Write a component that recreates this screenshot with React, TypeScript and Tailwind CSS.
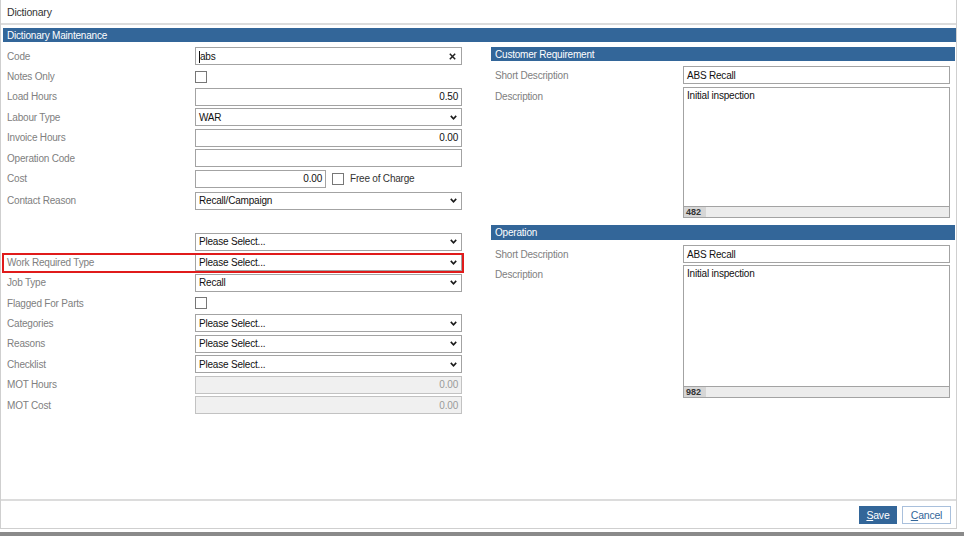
import React from "react";

const Chevron = () => (
  <svg width="7" height="5" viewBox="0 0 7 5" className="shrink-0">
    <path d="M0.8 0.9 L3.5 3.8 L6.2 0.9" fill="none" stroke="#1a1a1a" strokeWidth="1.6" />
  </svg>
);

const Row = ({
  label,
  children,
  tall,
}: {
  label: string;
  children?: React.ReactNode;
  tall?: boolean;
}) => (
  <div className={tall ? "flex items-center h-[24px]" : "flex items-center h-[20.4px]"}>
    <div className="w-[192px] pl-[4px] pt-[1px] text-[#808080] whitespace-nowrap">{label}</div>
    <div className="w-[267px] flex items-center">{children}</div>
  </div>
);

const TextInput = ({ value, right }: { value?: string; right?: boolean }) => (
  <div
    className={
      right
        ? "h-[18px] w-full border border-[#a3a3a3] bg-white flex items-center justify-end px-[3px] pt-[1px] text-[#111]"
        : "h-[18px] w-full border border-[#a3a3a3] bg-white flex items-center px-[3px] pt-[1px] text-[#111]"
    }
  >
    {value}
  </div>
);

const Disabled = ({ value }: { value: string }) => (
  <div className="h-[18px] w-full border border-[#c2c2c2] bg-[#f0f0f0] flex items-center justify-end px-[3px] pt-[1px] text-[#9a9a9a]">
    {value}
  </div>
);

const Select = ({ value }: { value: string }) => (
  <div className="h-[18px] w-full border border-[#a3a3a3] bg-white flex items-center justify-between pl-[3px] pr-[4px] text-[#111]">
    <span className="pt-[1px]">{value}</span>
    <Chevron />
  </div>
);

const Check = () => <div className="w-[12px] h-[12px] border border-[#777] bg-white" />;

const TextArea = ({ value, count, h }: { value: string; count: string; h: string }) => (
  <div className={h}>
    <div className="flex-1 px-[3px] pt-[1px] text-[#111]">{value}</div>
    <div className="h-[11px] border-t border-[#a3a3a3] bg-[#ececec] flex">
      <div className="w-[22px] bg-[#d6d6d6] pl-[2px] text-[9px] font-bold text-[#333] leading-[10px] tracking-normal">
        {count}
      </div>
    </div>
  </div>
);

export default function App() {
  return (
    <div className="w-[964px] h-[536px] bg-white overflow-hidden font-['Liberation_Sans',Arial,sans-serif] text-[10px] tracking-[-0.2px] leading-none">
      <div className="w-[957px] h-[529px] border-l border-r border-b border-[#cfcfcf] flex flex-col">
        {/* title */}
        <div className="h-[25px] border-b-2 border-[#dcdcdc] flex items-center pl-[6px] pt-[1px] text-[#333] text-[10.5px]">
          Dictionary
        </div>
        {/* main */}
        <div className="flex-1 pl-[2px] pt-[3px]">
          <div className="h-[14px] bg-[#336699] text-white flex items-center pl-[4px] pt-[1px]">
            Dictionary Maintenance
          </div>
          <div className="flex">
            {/* left column */}
            <div className="w-[462px] pt-[4px]">
              <Row label="Code">
                <div className="h-[18px] w-full border border-[#a3a3a3] bg-white flex items-center justify-between pl-[3px] pr-[5px] text-[#111]">
                  <span className="flex items-center pt-[1px]">
                    <span className="inline-block w-[1px] h-[12px] bg-[#111]" />
                    abs
                  </span>
                  <svg width="7" height="7" viewBox="0 0 7 7">
                    <path d="M0.8 0.8 L6.2 6.2 M6.2 0.8 L0.8 6.2" stroke="#222" strokeWidth="1.5" />
                  </svg>
                </div>
              </Row>
              <Row label="Notes Only">
                <Check />
              </Row>
              <Row label="Load Hours">
                <TextInput value="0.50" right />
              </Row>
              <Row label="Labour Type">
                <Select value="WAR" />
              </Row>
              <Row label="Invoice Hours">
                <TextInput value="0.00" right />
              </Row>
              <Row label="Operation Code">
                <TextInput />
              </Row>
              <Row label="Cost">
                <div className="w-[131px]">
                  <TextInput value="0.00" right />
                </div>
                <div className="ml-[6px]">
                  <Check />
                </div>
                <span className="ml-[6px] pt-[1px] text-[#333]">Free of Charge</span>
              </Row>
              <Row label="Contact Reason" tall>
                <Select value="Recall/Campaign" />
              </Row>
              <div className="h-[19px]" />
              <Row label="">
                <Select value="Please Select..." />
              </Row>
              <div className="relative">
                <Row label="Work Required Type">
                  <Select value="Please Select..." />
                </Row>
                <div className="absolute left-[-1px] top-[0.8px] w-[462px] h-[20px] border-2 border-[#e01b1b]" />
              </div>
              <Row label="Job Type">
                <Select value="Recall" />
              </Row>
              <Row label="Flagged For Parts">
                <Check />
              </Row>
              <Row label="Categories">
                <Select value="Please Select..." />
              </Row>
              <Row label="Reasons">
                <Select value="Please Select..." />
              </Row>
              <Row label="Checklist">
                <Select value="Please Select..." />
              </Row>
              <Row label="MOT Hours">
                <Disabled value="0.00" />
              </Row>
              <Row label="MOT Cost">
                <Disabled value="0.00" />
              </Row>
            </div>
            {/* right column */}
            <div className="ml-[26px] w-[464px] pt-[5px]">
              <div className="h-[14px] bg-[#336699] text-white flex items-center pl-[4px] pt-[1px]">
                Customer Requirement
              </div>
              <div className="mt-[4px] flex items-center h-[20px]">
                <div className="w-[192px] pl-[4px] pt-[1px] text-[#808080]">Short Description</div>
                <div className="w-[267px]">
                  <TextInput value="ABS Recall" />
                </div>
              </div>
              <div className="mt-[2px] flex">
                <div className="w-[192px] pl-[4px] pt-[5px] text-[#808080]">Description</div>
                <TextArea
                  value="Initial inspection"
                  count="482"
                  h="w-[267px] h-[131px] border border-[#a3a3a3] bg-white flex flex-col pt-[2px]"
                />
              </div>
              <div className="mt-[7px] h-[15px] bg-[#336699] text-white flex items-center pl-[4px] pt-[1px]">
                Operation
              </div>
              <div className="mt-[4px] flex items-center h-[20px]">
                <div className="w-[192px] pl-[4px] pt-[1px] text-[#808080]">Short Description</div>
                <div className="w-[267px]">
                  <TextInput value="ABS Recall" />
                </div>
              </div>
              <div className="mt-[1px] flex">
                <div className="w-[192px] pl-[4px] pt-[5px] text-[#808080]">Description</div>
                <TextArea
                  value="Initial inspection"
                  count="982"
                  h="w-[267px] h-[133px] border border-[#a3a3a3] bg-white flex flex-col pt-[2px]"
                />
              </div>
            </div>
          </div>
        </div>
        {/* footer */}
        <div className="h-[29px] border-t-2 border-[#dcdcdc] flex items-center justify-end pr-[5px] gap-[5px]">
          <button className="w-[38px] h-[18px] bg-[#336699] text-white text-[10.5px] flex items-center justify-center pt-[1px]">
            <span className="underline">S</span>ave
          </button>
          <button className="w-[49px] h-[18px] bg-white border border-[#a9c0dc] text-[#336699] text-[10.5px] flex items-center justify-center pt-[1px]">
            <span className="underline">C</span>ancel
          </button>
        </div>
      </div>
      <div className="mt-[3px] h-[4px] bg-[#8a8a8a]" />
    </div>
  );
}
